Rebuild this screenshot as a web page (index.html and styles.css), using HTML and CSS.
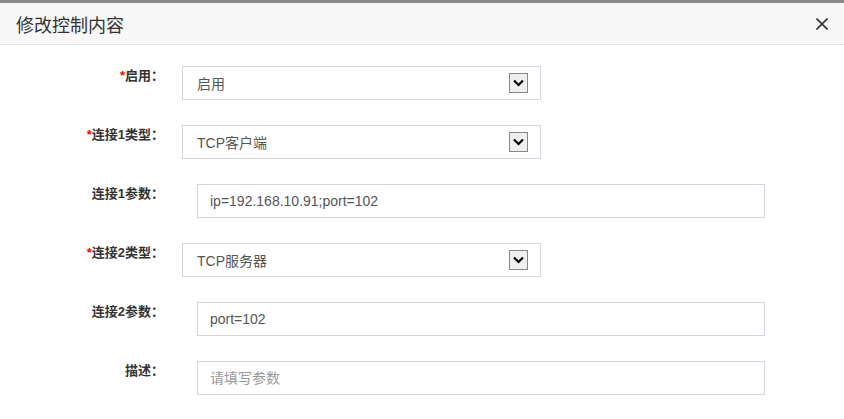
FILE: index.html
```html
<!DOCTYPE html>
<html lang="zh-CN">
<head>
    <meta charset="UTF-8">
    <meta name="viewport" content="width=device-width, initial-scale=1.0">
    <title>修改控制内容</title>
    <link rel="stylesheet" href="styles.css">
</head>
<body>
    <div class="modal">
        <div class="modal-header">
            <h4 class="modal-title">修改控制内容</h4>
            <button class="close-btn" type="button" aria-label="关闭">
                <svg width="12" height="12" viewBox="0 0 12 12">
                    <path d="M0.5 0.5 L11.5 11.5 M11.5 0.5 L0.5 11.5" stroke="#333" stroke-width="1.6" fill="none"/>
                </svg>
            </button>
        </div>

        <div class="modal-body">
            <div class="form-row">
                <label class="form-label"><span class="required">*</span>启用：</label>
                <div class="select-box">
                    <span class="select-text">启用</span>
                    <span class="select-arrow">
                        <svg width="11" height="8" viewBox="0 0 11 8">
                            <path d="M1 1.5 L5.5 6 L10 1.5" stroke="#000" stroke-width="2.2" fill="none"/>
                        </svg>
                    </span>
                </div>
            </div>

            <div class="form-row">
                <label class="form-label"><span class="required">*</span>连接1类型：</label>
                <div class="select-box">
                    <span class="select-text">TCP客户端</span>
                    <span class="select-arrow">
                        <svg width="11" height="8" viewBox="0 0 11 8">
                            <path d="M1 1.5 L5.5 6 L10 1.5" stroke="#000" stroke-width="2.2" fill="none"/>
                        </svg>
                    </span>
                </div>
            </div>

            <div class="form-row">
                <label class="form-label">连接1参数：</label>
                <input class="text-input" type="text" value="ip=192.168.10.91;port=102">
            </div>

            <div class="form-row">
                <label class="form-label"><span class="required">*</span>连接2类型：</label>
                <div class="select-box">
                    <span class="select-text">TCP服务器</span>
                    <span class="select-arrow">
                        <svg width="11" height="8" viewBox="0 0 11 8">
                            <path d="M1 1.5 L5.5 6 L10 1.5" stroke="#000" stroke-width="2.2" fill="none"/>
                        </svg>
                    </span>
                </div>
            </div>

            <div class="form-row">
                <label class="form-label">连接2参数：</label>
                <input class="text-input" type="text" value="port=102">
            </div>

            <div class="form-row">
                <label class="form-label">描述：</label>
                <input class="text-input" type="text" placeholder="请填写参数">
            </div>
        </div>
    </div>
</body>
</html>
```

FILE: styles.css
```css
body {
    margin: 0;
    font-family: "Liberation Sans", "Noto Sans CJK SC", sans-serif;
    background: #fff;
    color: #333;
}
.modal {
    border-top: 3px solid #8a8a8a;
    background: #fff;
    min-height: 416px;
}
.modal-header {
    display: flex;
    align-items: center;
    justify-content: space-between;
    height: 41px;
    padding: 0 16px;
    background: #f7f7f7;
    border-bottom: 1px solid #e5e5e5;
}
.modal-title {
    margin: 0;
    font-size: 18px;
    font-weight: normal;
    color: #333;
}
.close-btn {
    display: flex;
    padding: 0;
    border: none;
    background: none;
    cursor: pointer;
}
.modal-body {
    padding-top: 21px;
}
.form-row {
    display: flex;
    align-items: flex-start;
    margin-bottom: 25px;
}
.form-label {
    width: 164px;
    flex-shrink: 0;
    text-align: right;
    font-size: 13px;
    font-weight: bold;
    line-height: 20px;
    color: #333;
}
.required {
    color: #f00;
}
.select-box {
    display: flex;
    align-items: center;
    justify-content: space-between;
    box-sizing: border-box;
    width: 359px;
    height: 34px;
    margin-left: 18px;
    padding: 0 12px 0 14px;
    border: 1px solid #d2d6de;
    font-size: 14px;
    color: #555;
}
.select-arrow {
    display: flex;
    align-items: center;
    justify-content: center;
    box-sizing: border-box;
    width: 19px;
    height: 20px;
    border: 1px solid #888;
    background: #efefef;
}
.text-input {
    box-sizing: border-box;
    width: 568px;
    height: 34px;
    margin: 0 0 0 33px;
    padding: 0 12px;
    border: 1px solid #d2d6de;
    border-radius: 0;
    outline: none;
    font-family: inherit;
    font-size: 14px;
    color: #555;
}
.text-input::placeholder {
    color: #999;
}
```
